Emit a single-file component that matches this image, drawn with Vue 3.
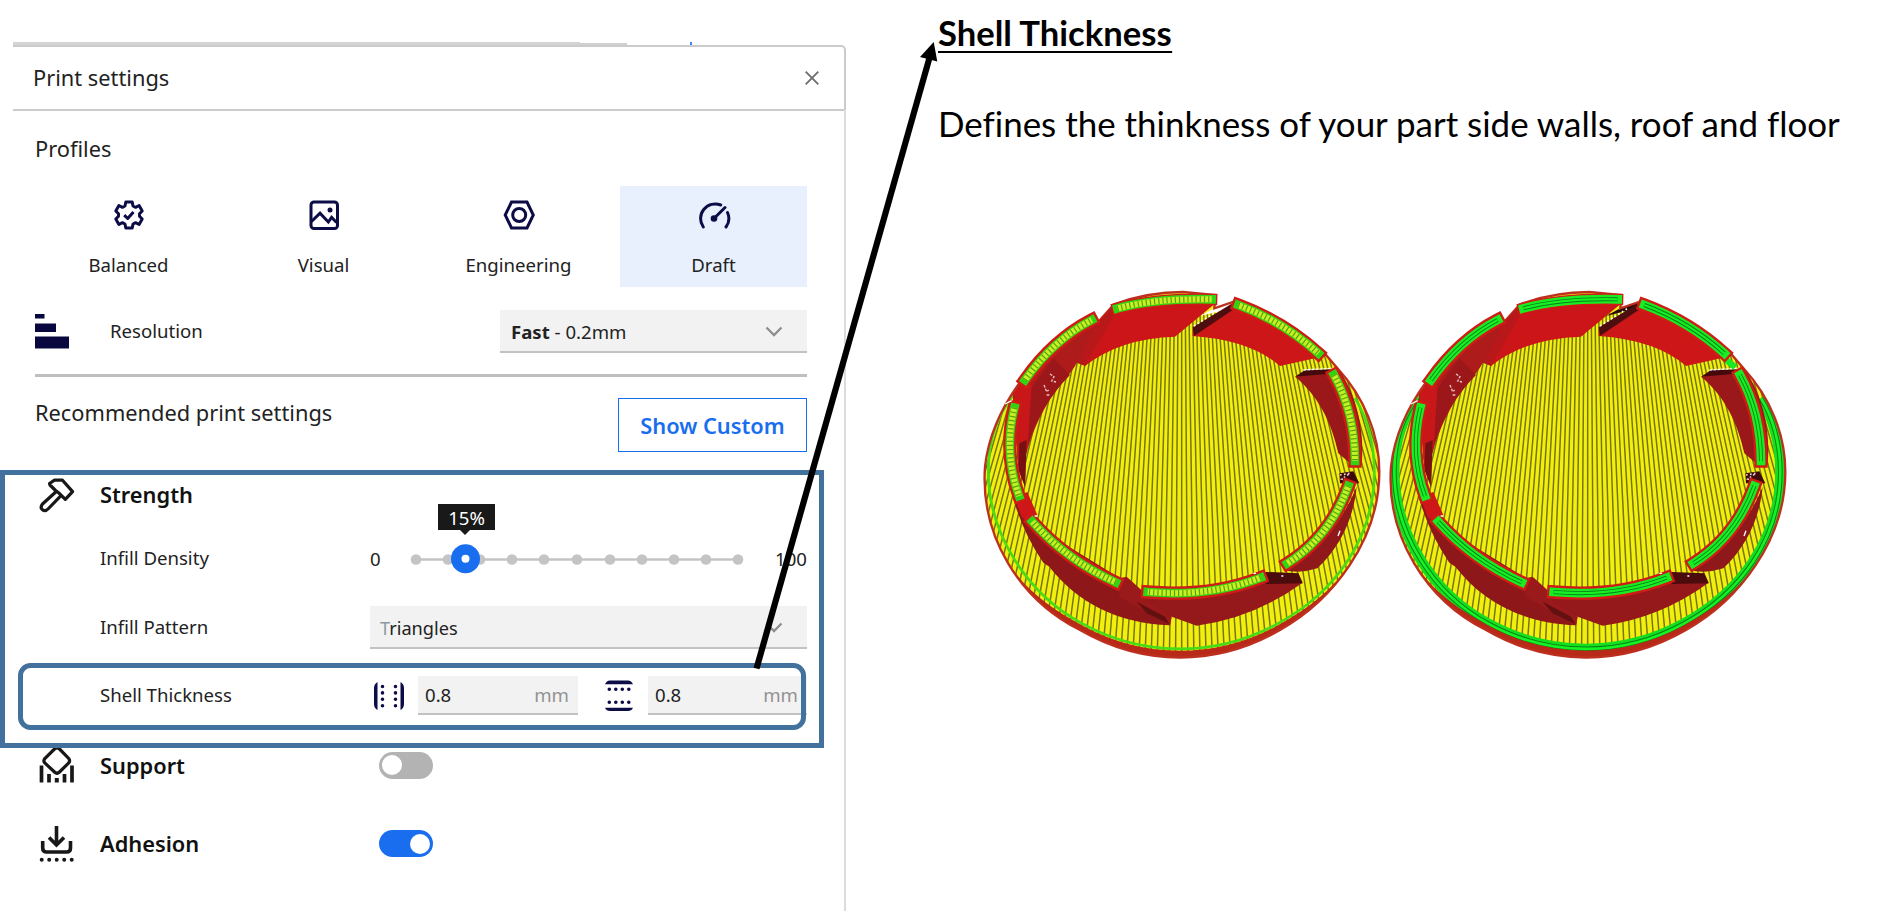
<script setup>
import { computed } from 'vue'

const stops = [416, 448, 480, 512, 544, 577, 610, 642, 674, 706, 738].map((x) => x - 410)

const bars = [
  'M165 300 Q250 180 365 120',
  'M442 85 Q560 54 725 58',
  'M805 75 Q940 125 1045 220',
  'M1092 285 Q1155 400 1155 543',
  'M1135 618 Q1080 770 952 850',
  'M872 893 Q720 952 533 936',
  'M437 907 Q290 840 187 725',
  'M133 383 Q100 520 147 648'
]

const stripes = computed(() => {
  let d = ''
  for (let i = -46; i <= 46; i++) {
    d += `M${635 + i * 11} 100L${635 + i * 18.5} 1150`
  }
  return d
})

const outline =
  'M45 560C55 470 95 380 155 300C210 222 290 145 365 105L385 125L432 73C500 48 570 36 640 36L736 45L733 85L800 62C890 90 980 140 1062 218L1105 268C1180 350 1228 460 1228 575C1228 780 1090 960 930 1050C740 1160 520 1160 330 1050C150 960 30 770 45 560Z'
const rim =
  'M130 345C80 410 55 480 55 575C55 760 170 940 335 1030C520 1132 740 1132 925 1030C1090 940 1213 780 1213 575C1213 490 1190 410 1155 355'
</script>

<template>
  <main class="page">
    <section class="panel">
      <div class="edge"><i class="e1"></i><i class="e2"></i><i class="e3"></i></div>
      <header class="head">
        <span class="title">Print settings</span>
        <svg width="14" height="14" viewBox="0 0 14 14"><path d="M.7.7 13.3 13.3M13.3.7.7 13.3" fill="none" stroke="#6f6f6f" stroke-width="1.9" /></svg>
      </header>
      <div class="body">
        <h2 class="title profiles-title">Profiles</h2>
        <div class="tiles">
          <div class="tile">
            <svg width="32" height="32" viewBox="0 0 32 32" fill="none" stroke="#0c0c46" stroke-width="3" stroke-linejoin="round">
              <path d="M12.8 3H19.2L20 7L22.6 8.3L26.1 6.5L29.2 12L26.5 14.7V17.3L29.2 20L26.1 25.5L22.6 23.7L20 25L19.2 29H12.8L12 25L9.4 23.7L5.900 25.500L2.800 20L5.500 17.300V14.700L2.800 12L5.900 6.500L9.400 8.300L12 7Z" />
              <path d="M11.200 16.200 14.700 19.500 20.500 13" />
            </svg>
            <span>Balanced</span>
          </div>
          <div class="tile">
            <svg width="32" height="32" viewBox="0 0 32 32" fill="none" stroke="#0c0c46" stroke-width="3">
              <rect x="3" y="3" width="26.500" height="26.500" rx="3" />
              <path d="M3.500 22.500 12 14.200 20.300 23 23.600 18.300 28.500 23.500" />
              <circle cx="22" cy="11" r="2.500" fill="#0c0c46" stroke="none" />
            </svg>
            <span>Visual</span>
          </div>
          <div class="tile">
            <svg width="32" height="32" viewBox="0 0 32 32" fill="none" stroke="#0c0c46" stroke-width="3">
              <path d="M8.500 3H24L30.300 16 24 29H8.500L2.200 16Z" />
              <circle cx="16.200" cy="16" r="6.500" />
            </svg>
            <span>Engineering</span>
          </div>
          <div class="tile active">
            <svg width="34" height="32" viewBox="0 0 34 32" fill="none" stroke="#0c0c46" stroke-width="3" stroke-linecap="round">
              <path d="M6.300 28A14.600 14.600 0 0 1 23.700 6M30.500 13.500A14.600 14.600 0 0 1 29 28M17.500 19 28 8.500" />
              <circle cx="17" cy="19.500" r="3.300" fill="#0c0c46" stroke="none" />
            </svg>
            <span>Draft</span>
          </div>
        </div>
        <div class="row resolution">
          <svg class="res-icon" width="34" height="35" viewBox="0 0 34 35" fill="#08083f"><path d="M0 0H9.500V4.500H0ZM0 9.500H21V18H0ZM0 22.500H34V34.500H0Z" /></svg>
          <span class="label">Resolution</span>
          <div class="select">
            <span><b>Fast</b> - 0.2mm</span>
            <svg class="chev" width="18" height="11" viewBox="0 0 18 11"><path d="M1.500 1.500 9 9 16.500 1.500" /></svg>
          </div>
        </div>
        <hr />
        <div class="recommended">
          <h2 class="title">Recommended print settings</h2>
          <button>Show Custom</button>
        </div>
        <div class="row strength">
          <svg class="ic" width="36" height="36" viewBox="0 0 36 36" fill="none" stroke="#181818" stroke-width="3.200" stroke-linejoin="round">
            <path d="M10.500 6.500 15.500 3.200H23.500L33.600 14.600 26.300 22.400 20.500 16.600 16.500 13.500 11 8Z" />
            <path d="M17 14.800 3.500 27Q.8 30.500 3.500 32.800 6.300 35 9.500 31.500L22 18.700" />
          </svg>
          <h3>Strength</h3>
        </div>
        <div class="row density">
          <span class="label">Infill Density</span>
          <span class="zero">0</span>
          <div class="slider">
            <svg width="334" height="40" viewBox="0 0 334 40">
              <path d="M6 21.500H328" stroke="#c3c4c5" stroke-width="2.500" />
              <circle v-for="s in stops" :key="s" :cx="s" cy="21.500" r="5.300" fill="#c3c4c5" />
              <circle cx="55.500" cy="20.800" r="14.500" fill="#196ef0" />
              <circle cx="55.500" cy="20.800" r="4" fill="#fff" />
            </svg>
            <span class="tip">15%</span>
          </div>
          <span class="hundred">100</span>
        </div>
        <div class="row pattern">
          <span class="label">Infill Pattern</span>
          <div class="select">
            <span class="tri"><i>T</i>riangles</span>
            <svg class="chev" width="18" height="11" viewBox="0 0 18 11"><path d="M1.500 1.500 9 9 16.500 1.500" /></svg>
          </div>
        </div>
        <div class="row shell">
          <span class="label">Shell Thickness</span>
          <svg class="sh1" width="32" height="28" viewBox="0 0 32 28" fill="#0c0c46">
            <path d="M4.500 0Q1 2 1 6V22Q1 26 4.500 28ZM27.500 0Q31 2 31 6V22Q31 26 27.500 28Z" />
            <path d="M9.500 4.500V24.500M22.500 4.500V24.500" fill="none" stroke="#0c0c46" stroke-width="3.600" stroke-linecap="round" stroke-dasharray="0 6.400" />
          </svg>
          <div class="input in1"><span>0.8</span><em>mm</em></div>
          <svg class="sh2" width="30" height="32" viewBox="0 0 30 32" fill="#0c0c46">
            <path d="M1 4.300Q2.500 .5 6 .5H24Q27.500 .5 29 4.300ZM1 27.700Q2.500 31 6 31H24Q27.500 31 29 27.700Z" />
            <path d="M5.300 9.300H26M5.300 22.300H26" fill="none" stroke="#0c0c46" stroke-width="3.600" stroke-linecap="round" stroke-dasharray="0 6.500" />
          </svg>
          <div class="input in2"><span>0.8</span><em>mm</em></div>
        </div>
        <div class="row support">
          <svg class="ic" width="36" height="38" viewBox="0 0 36 38" fill="none" stroke="#181818" stroke-width="3.200">
            <path d="M15.500 3Q18 .5 20.500 3L29.700 12.500Q31.500 15 29.700 17L20.500 26Q18 28.500 15.500 26L5.800 17Q4 15 5.800 12.500Z" />
            <path d="M2.500 19.500V36.500M33 19.500V36.500" stroke-width="3.700" />
            <path d="M10 28V36.500M25.500 28V36.500" stroke-width="3.700" />
            <path d="M17.800 32V36.500" stroke-width="4" />
          </svg>
          <h3>Support</h3>
          <span class="toggle"></span>
        </div>
        <div class="row adhesion">
          <svg class="ic" width="36" height="38" viewBox="0 0 36 38" fill="none" stroke="#181818" stroke-width="3.600">
            <path d="M17.500 1V20M10 12.500 17.500 20 25 12.500" />
            <path d="M3.700 16V23Q3.700 27 7.700 27H27.500Q31.500 27 31.500 23V16" />
            <path d="M2.700 34.800H33.500" stroke-linecap="round" stroke-width="4" stroke-dasharray="0 7.500" />
          </svg>
          <h3>Adhesion</h3>
          <span class="toggle on"></span>
        </div>
      </div>
    </section>

    <section class="notes">
      <h1><span>Shell Thickness</span></h1>
      <p><span>Defines the thinkness of your part side walls, roof and floor</span></p>
      <div class="models">
        <svg v-for="kind in ['thin', 'thick']" :key="kind" class="model" viewBox="0 0 1218 1170" width="406" height="390">
          <defs><clipPath :id="'disk-' + kind"><path :d="outline" /></clipPath></defs>
          <path :d="outline" fill="#f2ef10" />
          <g :clip-path="`url(#disk-${kind})`" fill="none">
            <path :d="stripes" stroke="#77760c" stroke-width="4.500" />
            <path d="M733 85 760 60 800 62 785 85 690 108Z" :fill="kind === 'thick' ? '#280707' : '#fff'" />
            <path v-if="kind === 'thin'" :d="rim" stroke="#49dc16" stroke-width="8" />
            <template v-else>
              <path :d="rim" stroke="#16df20" stroke-width="31" />
              <path :d="rim" stroke="#08821a" stroke-width="14" />
              <path :d="rim" stroke="#16f322" stroke-width="8" />
            </template>
            <path d="M120 880C180 960 260 1010 335 1050C520 1150 740 1150 925 1050C1000 1010 1090 950 1150 860" stroke="#b92918" stroke-width="26" />
            <path v-if="kind === 'thin'" :d="rim" stroke="#49dc16" stroke-width="5" />
          </g>
          <path :d="outline" fill="none" stroke="#bd3020" stroke-width="7" />

          <!-- upper walls -->
          <path d="M152 308C210 222 290 145 365 105L385 125 345 258 320 248C300 295 215 350 168 525L165 620 145 560 128 345Z" fill="#ad1b1b" />
          <path d="M180 330 250 235 300 285Q205 380 172 500Z" fill="#9b1719" />
          <path d="M130 340 155 308 185 315 173 500 145 560Z" fill="#c91719" />
          <path d="M148 490 170 480 165 620 145 570Z" fill="#761012" />
          <path d="M385 125 432 73Q560 40 736 48L730 75 615 170Q450 175 345 258L330 240Z" fill="#cc1518" />
          <path d="M432 75 438 95 345 258 330 240 385 125Z" fill="#b9181a" />
          <path d="M800 62Q950 110 1062 218L1048 232 930 258Q840 180 668 168L668 148Z" fill="#cc1618" />
          <path d="M668 142 795 65 800 82 672 168Z" fill="#4e0d0e" />
          <path d="M672 138 755 85" stroke="#fff" stroke-width="5" stroke-dasharray="5 8" />
          <path d="M975 290 1105 268C1158 340 1185 450 1175 555L1140 550 1105 520C1088 440 1050 350 975 290Z" fill="#9b181a" />
          <path d="M975 290 1005 270 1085 268 1070 282Z" fill="#45090b" />
          <path d="M1000 270 1100 264" stroke="#fff" stroke-width="4" stroke-dasharray="9 3" />
          <path v-if="kind === 'thick'" d="M1045 235 1078 262" stroke="#17e922" stroke-width="19" />

          <!-- lower walls -->
          <path d="M108 560 140 650 175 725 450 895 605 1005 600 1036C440 1030 320 965 238 860L220 848Q135 725 108 560Z" fill="#8e1719" />
          <path d="M132 652 172 636 202 705 175 730 155 710Z" fill="#cf171a" />
          <path d="M448 895 470 890 605 1012 600 1036 448 950Z" fill="#9a191a" />
          <path d="M500 965 585 1010 598 1032 530 1000Z" fill="#631011" />
          <path d="M520 953Q710 970 880 905L985 880 998 908Q850 1015 680 1037L605 1010Z" fill="#95191a" />
          <path d="M870 875 985 880 998 910 888 912Z" fill="#4c0b0d" />
          <path d="M940 870Q1090 790 1160 620C1150 720 1110 800 1042 865Q990 882 940 870Z" fill="#8f181a" />
          <path d="M1108 580 1150 574 1168 610 1110 610Z" fill="#3e090b" />
          <path d="M1110 585 1140 580 1115 597 1140 608" fill="none" stroke="#e9dada" stroke-width="5" stroke-dasharray="5 7" />

          <!-- wall tops -->
          <g fill="none">
            <path v-for="(b, i) in bars" :key="'a' + i" :d="b" stroke="#d01b16" :stroke-width="i === 1 ? 34 : 40" stroke-linecap="square" />
            <path v-for="(b, i) in bars" :key="'b' + i" :d="b" :stroke="kind === 'thick' ? '#18ec22' : '#31d412'" stroke-width="26" stroke-linecap="square" />
            <template v-if="kind === 'thick'">
              <path v-for="(b, i) in bars" :key="'c' + i" :d="b" stroke="#087d1b" stroke-width="12" />
              <path v-for="(b, i) in bars" :key="'d' + i" :d="b" stroke="#17f022" stroke-width="7" />
            </template>
            <template v-else>
              <path v-for="(b, i) in bars" :key="'e' + i" :d="b" stroke="#c8ef22" stroke-width="18" />
              <path v-for="(b, i) in bars" :key="'f' + i" :d="b" stroke="#4da40f" stroke-width="18" stroke-dasharray="3.500 9" />
            </template>
          </g>
          <path d="M240 282 252 290 245 303 258 306M222 315 230 335 236 330M230 345H238" fill="none" stroke="#e5c9c9" stroke-width="4" stroke-dasharray="8 4" />
          <path d="M105 372 125 362M194 708H202M850 880H858M934 888H940M1104 768 1110 752" fill="none" stroke="#fff" stroke-width="4" />
        </svg>
      </div>
    </section>

    <svg class="annotations" width="960" height="911" viewBox="0 0 960 911">
      <rect x="2.500" y="472.500" width="819" height="273" fill="none" stroke="#41719c" stroke-width="5" />
      <rect x="20.500" y="665.500" width="783" height="62" rx="10" fill="none" stroke="#41719c" stroke-width="5" />
      <path d="M756.500 668.500 930 56" stroke="#000" stroke-width="6.200" />
      <path d="M933.700 42 920 57 937.300 61.500Z" />
    </svg>
  </main>
</template>

<style>
body { background: #fff; overflow: hidden; }
</style>

<style scoped>
.page { position: relative; display: flex; width: 1892px; height: 911px; overflow: hidden; font-family: "Noto Sans", "Open Sans", sans-serif; font-size: 18.6px; color: #222; background: #fff; }
h1, h2, h3, p { margin: 0; font-weight: 400; }
.panel { width: 846px; box-sizing: border-box; padding: 42px 0 0 13px; flex: none; display: flex; flex-direction: column; }
.edge { display: flex; height: 3px; flex: none; }
.e1 { width: 567px; background: #d4d4d4; }
.e2 { width: 47px; height: 2px; margin-top: 1px; background: #d0d0d0; }
.e3 { width: 2px; margin-left: 63px; background: #3d86f2; }
.head { height: 66px; flex: none; box-sizing: border-box; border: 2px solid #cbcbcb; border-left: 0; border-radius: 0 5px 2px 0; display: flex; align-items: center; justify-content: space-between; padding: 0 25px 1px 20px; }
.title { font-size: 21.8px; line-height: 31px; }
.body { flex: 1; border-right: 2px solid #dcdcdc; padding-left: 22px; padding-right: 37px; }
.profiles-title { height: 75px; line-height: 76px; }
.tiles { display: grid; grid-template-columns: repeat(4, 187px); gap: 8px; }
.tile { height: 101px; display: flex; flex-direction: column; align-items: center; }
.tile svg { margin-top: 13px; height: 32px; }
.tile span { line-height: 26px; margin-top: 21px; }
.active { background: #e8f0fe; }
.row { display: flex; align-items: center; width: 772px; white-space: nowrap; }
.resolution { height: 43px; margin-top: 23px; }
.res-icon { margin-right: 41px; }
.resolution .label { width: 390px; padding-bottom: 2px; }
.select { box-sizing: border-box; height: 43px; display: flex; justify-content: space-between; align-items: center; background: #f2f2f2; border-bottom: 2px solid #c2c2c2; padding: 2px 24px 0 11px; flex: 1; }
.chev path { fill: none; stroke: #8e8e8e; stroke-width: 2.3; }
hr { height: 3px; margin: 21px 0 0; border: 0; background: #bfbfbf; width: 772px; }
.recommended { display: flex; justify-content: space-between; width: 772px; margin-top: 21px; height: 54px; }
.recommended .title { margin-top: -1px; }
button { width: 189px; height: 54px; border: 1.5px solid #196ef0; background: #fff; color: #196ef0; font: 600 21.8px "Noto Sans", sans-serif; padding: 0; }
h3 { font-size: 21.8px; font-weight: 600; width: 279px; color: #111; }
.ic { margin-left: 4px; margin-right: 25px; flex: none; }
.strength { margin-top: 22px; height: 41px; }
.density { margin-top: 23px; height: 40px; }
.density .label, .pattern .label, .shell .label { margin-left: 65px; width: 270px; flex: none; padding-bottom: 1px; }
.zero { width: 40px; padding-top: 1px; }
.slider { position: relative; width: 334px; height: 40px; }
.tip { position: absolute; left: 28px; top: -34px; width: 57px; height: 26px; background: #191919; color: #fff; line-height: 27px; text-align: center; }
.tip::after { content: ""; position: absolute; left: 22px; top: 26px; border: 5px solid transparent; border-top-color: #191919; }
.hundred { flex: 1; text-align: right; padding-top: 1px; }
.pattern { margin-top: 28px; height: 43px; }
.pattern .label { padding-bottom: 2px; }
.tri { font-size: 18.2px; margin-left: -1px; }
.tri i { font-style: normal; color: #8c9aa3; }
.shell { margin-top: 27px; height: 39px; }
.shell .label { padding-bottom: 2px; }
.sh1 { margin: 0 13px 0 3px; flex: none; }
.sh2 { margin: 0 14px 0 26px; flex: none; }
.input { box-sizing: border-box; height: 39px; width: 160px; background: #f2f2f2; border-bottom: 2px solid #c2c2c2; display: flex; align-items: center; justify-content: space-between; padding: 0 9px 0 7px; flex: none; }
.in2 { width: 159px; }
.input em { font-style: normal; color: #929292; }
.support { margin-top: 30px; height: 40px; }
.adhesion { margin-top: 38px; height: 41px; }
.toggle { width: 54px; height: 27px; border-radius: 14px; background: #b3b3b3; display: flex; align-items: center; box-sizing: border-box; padding: 0 3px; }
.toggle::before { content: ""; width: 20px; height: 20px; border-radius: 50%; background: #fff; }
.toggle.on { background: #196ef0; justify-content: flex-end; }
.notes { padding-left: 92px; font-family: Lato, "Open Sans", sans-serif; color: #000; flex: 1; min-width: 0; white-space: nowrap; font-variant-ligatures: none; }
.notes h1 { font-size: 34px; line-height: 40px; height: 40px; margin-top: 13px; font-weight: 700; }
.notes h1 span { display: inline-block; border-bottom: 2px solid #000; height: 38px; transform-origin: 0 0; transform: scaleX(1.018); }
.notes p { font-size: 34px; line-height: 40px; height: 40px; margin-top: 51px; }
.notes p span { display: inline-block; transform-origin: 0 0; transform: scaleX(1.027); }
.models { display: flex; margin-left: 32px; margin-top: 136px; }
.model { flex: none; overflow: visible; }
.annotations { position: absolute; left: 0; top: 0; }
</style>
